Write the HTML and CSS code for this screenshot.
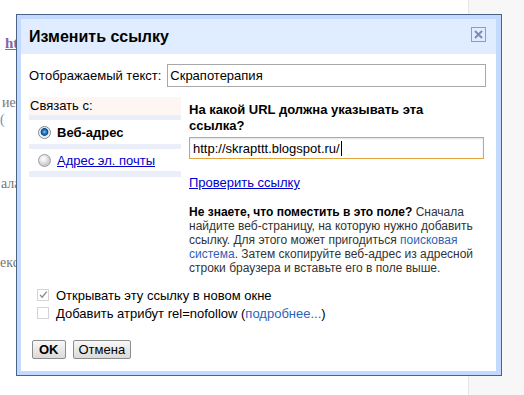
FILE: index.html
```html
<!DOCTYPE html>
<html lang="ru">
<head>
    <meta charset="UTF-8">
    <title>Изменить ссылку</title>
    <link rel="stylesheet" href="styles.css">
</head>
<body>
    <div class="page">
        <div class="page-main">
            <a class="bg-link" href="#">htt</a>
            <p class="bg-line bg-note">ие</p>
            <p class="bg-line bg-paren">(</p>
            <p class="bg-line bg-ala">ала</p>
            <p class="bg-line bg-eks">екс</p>
        </div>
        <div class="page-side"></div>
    </div>

    <!-- Диалог редактирования ссылки -->
    <div class="dialog">
        <div class="dialog-inner">
            <div class="dialog-title">
                <span>Изменить ссылку</span>
                <button class="close" title="Закрыть">
                    <svg width="9" height="9" viewBox="0 0 9 9"><path d="M1 1 L8 8 M8 1 L1 8" stroke="#7b8db4" stroke-width="2" fill="none"/></svg>
                </button>
            </div>
            <div class="dialog-body">
                <div class="text-row">
                    <label>Отображаемый текст:</label>
                    <input type="text" class="field" value="Скрапотерапия">
                </div>

                <div class="link-cols">
                    <div class="link-type">
                        <div class="link-type-label">Связать с:</div>
                        <div class="link-type-list">
                            <div class="link-type-item item-web">
                                <span class="radio on"></span>
                                <b>Веб-адрес</b>
                            </div>
                            <div class="link-type-item item-mail">
                                <span class="radio"></span>
                                <a href="#">Адрес эл. почты</a>
                            </div>
                        </div>
                    </div>

                    <div class="link-target">
                        <div class="question">На какой URL должна указывать эта ссылка?</div>
                        <div class="url-field">http://skrapttt.blogspot.ru/<span class="caret"></span></div>
                        <a class="test-link" href="#">Проверить ссылку</a>
                        <p class="help"><b>Не знаете, что поместить в это поле?</b> Сначала найдите веб-страницу, на которую нужно добавить ссылку. Для этого может пригодиться <a href="#">поисковая система</a>. Затем скопируйте веб-адрес из адресной строки браузера и вставьте его в поле выше.</p>
                    </div>
                </div>

                <div class="options">
                    <div class="option">
                        <span class="checkbox">
                            <svg width="12" height="12" viewBox="0 0 12 12"><path d="M2.5 6 L5 8.6 L10.5 2" stroke="#8a8a8a" stroke-width="1.6" fill="none"/></svg>
                        </span>
                        <span>Открывать эту ссылку в новом окне</span>
                    </div>
                    <div class="option">
                        <span class="checkbox"></span>
                        <span>Добавить атрибут rel=nofollow (<a href="#">подробнее...</a>)</span>
                    </div>
                </div>

                <div class="buttons">
                    <button class="btn btn-ok">OK</button>
                    <button class="btn">Отмена</button>
                </div>
            </div>
        </div>
    </div>
</body>
</html>
```

FILE: styles.css
```css
* {
    box-sizing: border-box;
}

body {
    margin: 0;
    font-family: "Liberation Sans", Arial, sans-serif;
    font-size: 13px;
    color: #000;
    background: #fff;
}

/* Страница под диалогом */
.page {
    display: flex;
    height: 395px;
}

.page-main {
    width: 468px;
    overflow: hidden;
    font-family: "Liberation Serif", serif;
    font-size: 14px;
    color: #777;
    white-space: nowrap;
}

.page-side {
    flex: 1;
    background: #f7f7f7;
    border-left: 1px solid #e6e6e6;
}

.bg-link {
    display: block;
    margin-top: 34px;
    padding-left: 5px;
    line-height: 18px;
    font-weight: bold;
    font-size: 15px;
    color: #8565a8;
}

.bg-line {
    margin: 0;
    line-height: 17px;
    padding-left: 2px;
}

.bg-note { margin-top: 42px; }
.bg-paren { color: #8a7fc0; padding-left: 0; }
.bg-ala { margin-top: 47px; padding-left: 1px; }
.bg-eks { margin-top: 62px; padding-left: 0; }

/* Диалог */
.dialog {
    position: absolute;
    left: 16px;
    top: 14px;
    width: 486px;
    height: 362px;
    border: 1px solid #4b6387;
    background: #c3d9ff;
    padding: 4px 5px 4px 4px;
}

.dialog-inner {
    background: #fff;
    height: 100%;
}

.dialog-title {
    height: 35px;
    background: #e0ecff;
    display: flex;
    justify-content: space-between;
    align-items: center;
    padding: 0 10px 0 8px;
    font-size: 16px;
    font-weight: bold;
}

.close {
    align-self: flex-start;
    margin-top: 8px;
    width: 15px;
    height: 15px;
    padding: 0;
    border: 1px solid #8a9ec4;
    background: #e0ecff;
    display: flex;
    align-items: center;
    justify-content: center;
}

.dialog-body {
    padding: 10px 11px 0 8px;
}

.text-row {
    display: flex;
    align-items: center;
    gap: 6px;
}

.field {
    flex: 1;
    height: 23px;
    border: 1px solid #a8a8a8;
    padding: 0 2px;
    font-family: inherit;
    font-size: 13px;
    margin-right: -1px;
}

.link-cols {
    display: flex;
    gap: 8px;
    margin-top: 10px;
}

.link-type {
    width: 152px;
    flex-shrink: 0;
}

.link-type-label {
    background: #fdf6f2;
    height: 18px;
    line-height: 18px;
    padding-left: 1px;
}

.link-type-list {
    background: #e9eef8;
    padding: 5px 0 6px;
    display: flex;
    flex-direction: column;
    gap: 5px;
}

.link-type-item {
    background: #fff;
    display: flex;
    align-items: center;
    gap: 6px;
    padding-left: 9px;
}

.item-web { height: 24px; }
.item-mail { height: 22px; }

.link-type-item a {
    color: #0000cc;
}

.radio {
    width: 13px;
    height: 13px;
    border-radius: 50%;
    border: 1px solid #9a9ea4;
    background: radial-gradient(circle at 40% 35%, #fff 0, #ececec 3px, #cdcdcd 6px);
}

.radio.on {
    border-color: #7d8691;
    background: radial-gradient(circle at 50% 45%, #8fd3ff 0, #2a86cc 1.5px, #0b4a86 3.5px, #dfe3e8 4.2px, #fff 6px);
}

.link-target {
    flex: 1;
    padding-top: 5px;
}

.question {
    font-weight: bold;
    line-height: 16px;
    padding-right: 34px;
}

.url-field {
    margin-top: 3px;
    margin-right: 1px;
    height: 22px;
    border: 1px solid #e2a43c;
    box-shadow: inset 0 1px 2px rgba(0, 0, 0, 0.12);
    display: flex;
    align-items: center;
    padding-left: 3px;
}

.caret {
    display: inline-block;
    width: 1px;
    height: 15px;
    background: #000;
    margin-left: 1px;
}

.test-link {
    display: block;
    margin-top: 16px;
    line-height: 16px;
    color: #0000cc;
}

.help {
    margin: 14px 0 0;
    font-size: 12px;
    line-height: 14px;
    color: #333;
}

.help b {
    color: #000;
}

.help a,
.option a {
    color: #2f5fb8;
    text-decoration: none;
}

.options {
    margin-top: 11px;
}

.option {
    display: flex;
    align-items: center;
    gap: 7px;
    height: 18px;
    padding-left: 8px;
}

.checkbox {
    width: 12px;
    height: 12px;
    border: 1px solid #d4d4d4;
    background: #fff;
    display: flex;
    align-items: center;
    justify-content: center;
}

.buttons {
    margin-top: 18px;
    padding-left: 3px;
    display: flex;
    gap: 7px;
}

.btn {
    height: 19px;
    padding: 0 5px;
    border: 1px solid #8c8c8c;
    border-radius: 2px;
    background: linear-gradient(#f8f8f8, #dadada);
    font-family: inherit;
    font-size: 13px;
    color: #000;
    line-height: 17px;
}

.btn-ok {
    font-weight: bold;
    padding: 0 6px;
}
```
